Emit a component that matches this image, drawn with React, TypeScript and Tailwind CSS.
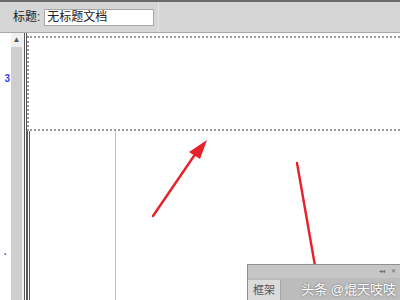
import React from "react"

const font = { fontFamily: '"Liberation Sans", "Noto Sans CJK SC", sans-serif' }

function Arrows() {
  return (
    <svg className="absolute inset-0 pointer-events-none" width="400" height="300" viewBox="0 0 400 300">
      <line x1="153" y1="216" x2="196" y2="153" stroke="#e8202a" strokeWidth="2.4" strokeLinecap="round" />
      <polygon points="207,140 189,152 200,159" fill="#e8202a" />
      <line x1="297" y1="163" x2="318" y2="283" stroke="#e8202a" strokeWidth="2.4" strokeLinecap="round" />
      <polygon points="321,298 313,282 325,281" fill="#e8202a" />
    </svg>
  )
}

function FramePanel() {
  return (
    <div className="absolute left-[247px] top-[264px] w-[153px] h-[36px] flex flex-col border-l border-t border-[#8f8f8f]">
      <div className="h-[13px] bg-[#c6c6c6] flex items-center justify-end gap-[6px] pr-[4px] text-[6px] text-[#666]">
        <span>◂◂</span>
        <span>✕</span>
      </div>
      <div className="flex-1 bg-[#bcbcbc] flex items-end">
        <div className="h-[20px] w-[33px] bg-[#dcdcdc] border-r border-[#a5a5a5] flex items-center justify-center text-[11px] text-[#555]">
          框架
        </div>
        <div className="flex-1 flex items-center justify-end pr-[4px] h-[20px] text-[13px] text-white [text-shadow:0_0_2px_#555]">
          头条 @焜天吱吱
        </div>
      </div>
    </div>
  )
}

export default function App() {
  return (
    <div className="relative w-[400px] h-[300px] overflow-hidden bg-white flex flex-col" style={font}>
      <div className="h-[2px] bg-[#6b6b6b]" />
      <div className="h-[31px] bg-[#d6d6d6] flex items-center border-b border-[#a8a8a8]">
        <span className="ml-[13px] text-[12px] text-[#222]">标题:</span>
        <div className="ml-[4px] w-[110px] h-[17px] bg-white border border-[#a6a6a6] flex items-center pl-[2px] text-[12px] text-[#222]">
          无标题文档
        </div>
        <div className="ml-[4px] w-px h-[30px] bg-[#e6e6e6]" />
      </div>
      <div className="flex-1 flex">
        <div className="w-[27px] flex border-r-[3px] border-double border-[#555]">
          <div className="w-[11px] relative text-[10px] font-bold text-[#3344ee]">
            <span className="absolute right-[1px] top-[38px]">3</span>
            <span className="absolute right-[4px] top-[214px]">·</span>
          </div>
          <div className="w-[11px] bg-[#cfcfcf] flex flex-col items-center">
            <div className="w-full h-[14px] bg-[#f0f0f0] flex items-center justify-center text-[8px] text-[#555]">
              ▲
            </div>
          </div>
          <div className="flex-1 bg-[#f2f2f2]" />
        </div>
        <div className="flex-1 flex flex-col pt-[3px]">
          <div className="h-[95px] border-2 border-dotted border-[#999] border-r-0" />
          <div className="flex-1 flex border-l-[3px] border-double border-[#555]">
            <div className="w-[86px] border-r border-[#bdbdbd]" />
            <div className="flex-1" />
          </div>
        </div>
      </div>
      <Arrows />
      <FramePanel />
    </div>
  )
}
